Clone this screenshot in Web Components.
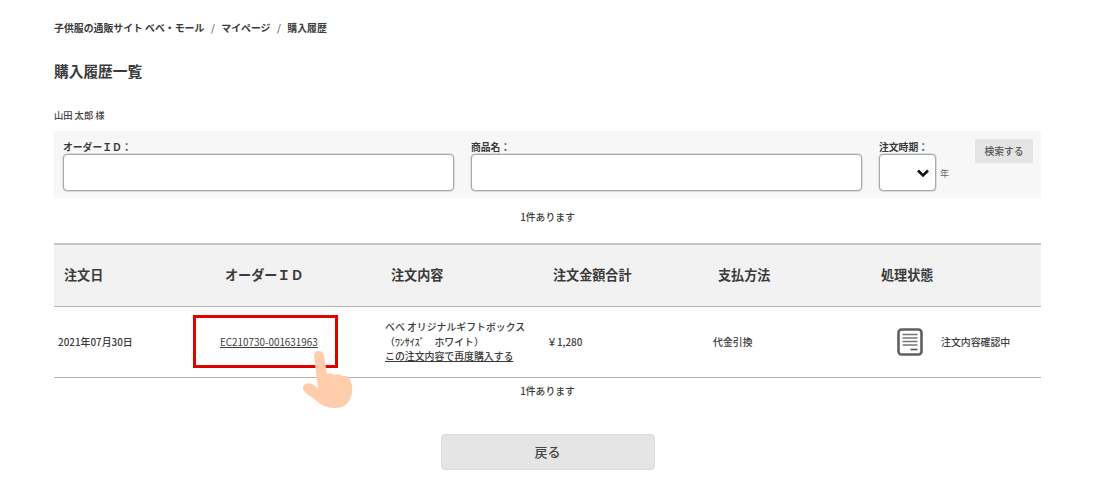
<!DOCTYPE html>
<html lang="ja">
<head>
<meta charset="utf-8">
<title>購入履歴一覧</title>
<style>
  html, body { margin: 0; background: #fff; }
  body { font-family: "Noto Sans CJK JP", "Liberation Sans", sans-serif; color: #333; }
</style>
</head>
<body>
<history-page>
  <bread-crumbs></bread-crumbs>
  <page-title>購入履歴一覧</page-title>
  <buyer-line></buyer-line>
  <search-panel></search-panel>
  <result-count style="--gap-top:12px">1件あります</result-count>
  <order-table></order-table>
  <result-count style="--gap-top:6px">1件あります</result-count>
  <back-button>戻る</back-button>
  <tap-callout></tap-callout>
</history-page>

<script>
const define = (name, html) => {
  customElements.define(name, class extends HTMLElement {
    constructor() {
      super();
      this.attachShadow({ mode: "open" }).innerHTML = html;
    }
  });
};

define("history-page", `
  <style>
    :host { display: block; position: relative; width: 987px; height: 499px; padding-left: 54px; overflow: hidden; }
  </style>
  <slot></slot>
`);

define("bread-crumbs", `
  <style>
    :host { display: flex; gap: 6.5px; padding-top: 21px; height: 14px; font-size: 9.9px; line-height: 14px; font-weight: 700; color: #3a3a3a; }
    span { white-space: pre; }
    i { font-style: normal; font-weight: 400; }
  </style>
  <span>子供服の通販サイト ベベ・モール</span><i>/</i><span>マイページ</span><i>/</i><span>購入履歴</span>
`);

define("page-title", `
  <style>
    :host { display: block; margin-top: 25px; height: 22px; font-size: 14.7px; line-height: 22px; font-weight: 700; color: #3a3a3a; }
  </style>
  <slot></slot>
`);

define("buyer-line", `
  <style>
    :host { display: flex; margin-top: 26px; height: 14px; gap: 2px; font-size: 9.3px; line-height: 14px; color: #444; font-weight: 500; }
  </style>
  <span>山田</span><span>太郎</span><span>様</span>
`);

define("search-field", `
  <style>
    :host { display: block; width: var(--w); }
    label { display: block; height: 15px; font-size: 9.8px; line-height: 16px; font-weight: 700; color: #3a3a3a; }
    .box { box-sizing: border-box; height: 37px; background: #fff; border: 1px solid #aaa; border-radius: 4px; box-shadow: 0 0 0 .5px #c4c4c4; }
  </style>
  <label><slot></slot></label>
  <div class="box"></div>
`);

define("year-select", `
  <style>
    :host { display: block; width: 70px; }
    label { display: block; height: 15px; font-size: 9.8px; line-height: 16px; font-weight: 700; color: #3a3a3a; white-space: nowrap; }
    .row { display: flex; align-items: center; gap: 4px; }
    .box { box-sizing: border-box; display: flex; align-items: center; justify-content: flex-end; padding-right: 5px; width: 57px; height: 37px; background: #fff; border: 1px solid #aaa; border-radius: 4px; box-shadow: 0 0 0 .5px #c4c4c4; }
    span { font-size: 9px; line-height: 12px; padding-top: 3px; color: #666; }
    svg { display: block; }
  </style>
  <label>注文時期：</label>
  <div class="row">
    <div class="box"><svg width="14" height="10" viewBox="0 0 14 10"><path d="M2 2.5 7 7.5 12 2.5" fill="none" stroke="#111" stroke-width="2.6"/></svg></div>
    <span>年</span>
  </div>
`);

define("search-panel", `
  <style>
    :host { box-sizing: border-box; display: flex; align-items: flex-start; margin-top: 9px; width: 987px; height: 67px; padding: 8px 0 0 9px; background: #f7f7f7; }
    .fields { display: flex; gap: 17px; }
    button { box-sizing: border-box; margin: 0 0 0 26px; height: 24px; width: 58px; flex: none; border: 0; padding: 0; background: #e4e4e4; font: 500 9.8px/24px "Noto Sans CJK JP", sans-serif; color: #555; }
  </style>
  <div class="fields">
    <search-field style="--w:391px">オーダーＩＤ：</search-field>
    <search-field style="--w:391px">商品名：</search-field>
    <year-select></year-select>
  </div>
  <button>検索する</button>
`);

define("result-count", `
  <style>
    :host { display: block; margin-top: var(--gap-top, 0); height: 14px; font-size: 9.8px; line-height: 14px; text-align: center; font-weight: 500; color: #3a3a3a; }
  </style>
  <slot></slot>
`);

define("doc-icon", `
  <style>
    :host { display: block; width: 28px; height: 30px; }
    svg { display: block; }
  </style>
  <svg width="28" height="30" viewBox="0 0 28 30">
    <rect x="2.5" y="2.5" width="23" height="25" rx="3" fill="#fff" stroke="#5f5f5f" stroke-width="2.6"/>
    <path d="M6.5 7.5h15M6.5 11h15M6.5 14.5h15M6.5 18h15" stroke="#777" stroke-width="1.4"/>
    <path d="M14.5 22.5h7" stroke="#555" stroke-width="1.6"/>
  </svg>
`);

define("order-table", `
  <style>
    :host { display: block; margin-top: 19px; width: 987px; }
    .row { display: grid; grid-template-columns: 139px 192px 164px 164px 164px 164px; align-items: center; }
    .head { box-sizing: border-box; height: 64px; background: #f2f2f2; border-top: 2px solid #c4c4c4; border-bottom: 1px solid #b4b4b4; font-size: 13.1px; font-weight: 700; color: #3a3a3a; padding-bottom: 2px; }
    .body { box-sizing: border-box; height: 71px; border-bottom: 1px solid #b4b4b4; font-size: 9.9px; line-height: 14.5px; color: #3a3a3a; font-weight: 500; }
    .head div:nth-child(1) { padding-left: 10px; }
    .head div:nth-child(2) { padding-left: 32px; }
    .head div:nth-child(3) { padding-left: 6px; }
    .head div:nth-child(4) { padding-left: 4px; }
    .head div:nth-child(5) { padding-left: 5px; }
    .head div:nth-child(6) { padding-left: 4px; }
    .body > div:nth-child(1) { padding-left: 4px; }
    .body > div:nth-child(2) { padding-left: 27px; font-size: 9.9px; font-weight: 400; }
    .body > div:nth-child(4) { margin-left: -2px; }
    .status { display: flex; align-items: center; gap: 17px; padding-left: 19px; }
    a { color: inherit; text-decoration: underline; }
    .items { white-space: pre; }
  </style>
  <div class="row head">
    <div>注文日</div><div>オーダーＩＤ</div><div>注文内容</div><div>注文金額合計</div><div>支払方法</div><div>処理状態</div>
  </div>
  <div class="row body">
    <div>2021年07月30日</div>
    <div><a href="#">EC210730-001631963</a></div>
    <div class="items">ベベ オリジナルギフトボックス
（ﾜﾝｻｲｽﾞ　ホワイト）
<a href="#">この注文内容で再度購入する</a></div>
    <div>￥1,280</div>
    <div>代金引換</div>
    <div class="status"><doc-icon></doc-icon><span>注文内容確認中</span></div>
  </div>
`);

define("back-button", `
  <style>
    :host { display: flex; justify-content: center; margin-top: 36px; }
    button { box-sizing: border-box; width: 214px; height: 36px; padding: 0; border: 1px solid #dcdcdc; border-radius: 4px; background: #e5e5e5; font: 500 13px/34px "Noto Sans CJK JP", sans-serif; color: #444; }
  </style>
  <button><slot></slot></button>
`);

// the red box and the pointing hand sit on top of the table row
define("tap-callout", `
  <style>
    :host { position: absolute; left: 193px; top: 315px; width: 170px; height: 100px; pointer-events: none; }
    .frame { position: absolute; left: 0; top: 0; box-sizing: border-box; width: 145px; height: 53px; border: 3px solid #e00000; }
    svg { position: absolute; left: 0; top: 0; }
  </style>
  <div class="frame"></div>
  <svg width="170" height="100" viewBox="193 315 170 100">
    <path fill="#fdcdac" d="M314 356Q314 351 319 351Q323 351 324 356L327 374Q331 372 334 375Q339 373 342 376Q348 375 350 380Q353 386 352 392Q350 408 335 408Q325 408 318 402L306 393Q301 389 304 385Q307 382 312 384L318 388Z"/>
  </svg>
`);
</script>
</body>
</html>
